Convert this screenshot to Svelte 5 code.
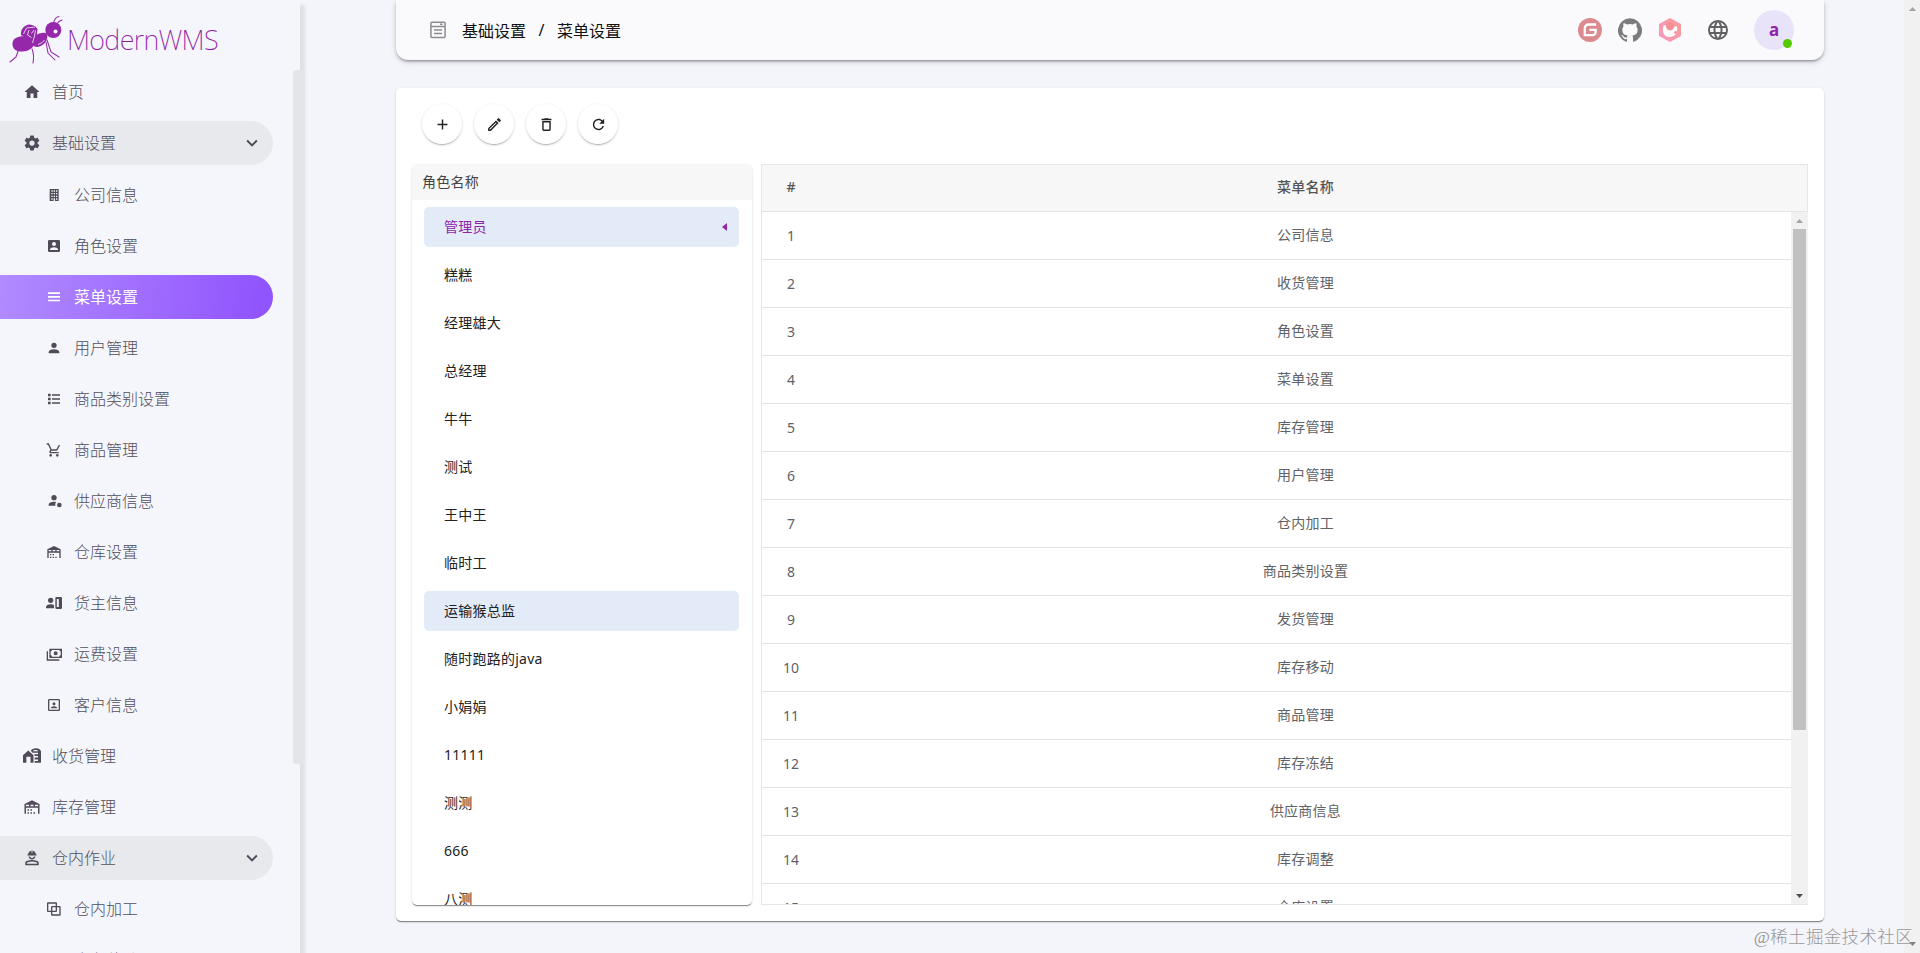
<script>
  const I = {
    home: 'M10,20V14H14V20H19V12H22L12,3L2,12H5V20H10Z',
    cog: 'M12,15.5A3.5,3.5 0 0,1 8.5,12A3.5,3.5 0 0,1 12,8.5A3.5,3.5 0 0,1 15.5,12A3.5,3.5 0 0,1 12,15.5M19.43,12.97C19.47,12.65 19.5,12.33 19.5,12C19.5,11.67 19.47,11.34 19.43,11L21.54,9.37C21.73,9.22 21.78,8.95 21.66,8.73L19.66,5.27C19.54,5.05 19.27,4.96 19.05,5.05L16.56,6.05C16.04,5.66 15.5,5.32 14.87,5.07L14.5,2.42C14.46,2.18 14.25,2 14,2H10C9.75,2 9.54,2.18 9.5,2.42L9.13,5.07C8.5,5.32 7.96,5.66 7.44,6.05L4.95,5.05C4.73,4.96 4.46,5.05 4.34,5.27L2.34,8.73C2.21,8.95 2.27,9.22 2.46,9.37L4.57,11C4.53,11.34 4.5,11.67 4.5,12C4.5,12.33 4.53,12.65 4.57,12.97L2.46,14.63C2.27,14.78 2.21,15.05 2.34,15.27L4.34,18.73C4.46,18.95 4.73,19.03 4.95,18.95L7.44,17.94C7.96,18.34 8.5,18.68 9.13,18.93L9.5,21.58C9.54,21.82 9.75,22 10,22H14C14.25,22 14.46,21.82 14.5,21.58L14.87,18.93C15.5,18.67 16.04,18.34 16.56,17.94L19.05,18.95C19.27,19.03 19.54,18.95 19.66,18.73L21.66,15.27C21.78,15.05 21.73,14.78 21.54,14.63L19.43,12.97Z',
    office: 'M5.500,3V21H19V3H5.500M8,5H10V7H8V5M11.500,5H13.500V7H11.500V5M15,5H17V7H15V5M8,9H10V11H8V9M11.500,9H13.500V11H11.500V9M15,9H17V11H15V9M8,13H10V15H8V13M11.500,13H13.500V15H11.500V13M15,13H17V15H15V13M8,17H10V19H8V17M11.500,17H13.500V21H11.500V17M15,17H17V19H15V17Z',
    accountBox: 'M6,17C6,15 10,13.9 12,13.9C14,13.9 18,15 18,17V18H6M15,9A3,3 0 0,1 12,12A3,3 0 0,1 9,9A3,3 0 0,1 12,6A3,3 0 0,1 15,9M3,5V19A2,2 0 0,0 5,21H19A2,2 0 0,0 21,19V5A2,2 0 0,0 19,3H5C3.89,3 3,3.9 3,5Z',
    menu: 'M3,5H21V7.5H3V5M3,10.500H21V13H3V10.500M3,16H21V18.500H3V16Z',
    account: 'M12,4A4,4 0 0,1 16,8A4,4 0 0,1 12,12A4,4 0 0,1 8,8A4,4 0 0,1 12,4M12,14C16.42,14 20,15.79 20,18V20H4V18C4,15.79 7.58,14 12,14Z',
    list: 'M3,4H7V8H3V4M9,5V7H21V5H9M3,10H7V14H3V10M9,11V13H21V11H9M3,16H7V20H3V16M9,17V19H21V17H9Z',
    cart: 'M17,18A2,2 0 0,1 19,20A2,2 0 0,1 17,22C15.89,22 15,21.1 15,20C15,18.89 15.89,18 17,18M1,2H4.27L8.5,11H15.5L19.4,4L21.1,5L17.3,11.97C16.96,12.58 16.3,13 15.55,13H8.1L7.2,14.63L7.17,14.75A0.25,0.25 0 0,0 7.42,15H19V17H7C5.89,17 5,16.1 5,15C5,14.65 5.09,14.32 5.24,14.04L6.6,11.59L3,4H1V2M7,18A2,2 0 0,1 9,20A2,2 0 0,1 7,22C5.89,22 5,21.1 5,20C5,18.89 5.89,18 7,18Z',
    supplier: 'M12,3A4,4 0 0,1 16,7A4,4 0 0,1 12,11A4,4 0 0,1 8,7A4,4 0 0,1 12,3M4,19V17C4,14.8 7.6,13 12,13C13.2,13 14.4,13.1 15.4,13.4C14,14.8 13.5,17 14.2,19H4M20,14.5A3.5,3.5 0 1,1 20,21.5A3.5,3.5 0 1,1 20,14.5Z',
    warehouse: 'M6 19H8V21H6V19M12 3L2 8V21H4V13H20V21H22V8L12 3M8 11H4V9H8V11M14 11H10V9H14V11M20 11H16V9H20V11M6 15H8V17H6V15M10 15H12V17H10V15M10 19H12V21H10V19M14 19H16V21H14V19Z',
    owner: 'M7,4A4,4 0 1,1 7,12A4,4 0 1,1 7,4M0,20V18C0,15.8 3,14 7,14C9,14 11,14.4 12,15.2V20H0M16,3H22A2,2 0 0,1 24,5V19A2,2 0 0,1 22,21H16A2,2 0 0,1 14,19V5A2,2 0 0,1 16,3M16.2,6V18H19.2V6H16.2Z',
    cash: 'M5,4H24V18H5V4M14.5,8A3,3 0 0,1 17.5,11A3,3 0 0,1 14.5,14A3,3 0 0,1 11.5,11A3,3 0 0,1 14.5,8M9,6A2,2 0 0,1 7,8V14A2,2 0 0,1 9,16H20A2,2 0 0,1 22,14V8A2,2 0 0,1 20,6H9M1,8H3V20H20V22H1V8Z',
    accountBoxO: 'M19,19H5V5H19M19,3H5A2,2 0 0,0 3,5V19A2,2 0 0,0 5,21H19A2,2 0 0,0 21,19V5A2,2 0 0,0 19,3M16.5,16.25C16.5,14.75 13.5,14 12,14C10.5,14 7.5,14.75 7.5,16.25V17H16.5M12,12.25A2.25,2.25 0 0,0 14.25,10A2.25,2.25 0 0,0 12,7.75A2.25,2.25 0 0,0 9.75,10A2.25,2.25 0 0,0 12,12.25Z',
    silo: 'M0,21V11L7,4.5L14,11V21H10V13H4.5V21H0M10.5,5C11,3 14,1.5 17.5,1.5C21,1.5 24,3.5 24,6V21H15.5V18.5H20V16.5H15.5V14H20V12H15.5V10.5L14.5,9.5H20V7.5H12.5L10.5,5M13,5.5H20.5C19,3.5 15,3.2 13,5.5Z',
    worker: 'M7,7C7,4.5 8.5,3 10.5,2.3V5H11.3V2H12.7V5H13.5V2.3C15.5,3 17,4.5 17,7H18V8.5H6V7H7M7.5,10H9.5C9.8,11.3 10.8,12 12,12C13.2,12 14.2,11.3 14.5,10H16.5C16.2,12.5 14.3,14 12,14C9.7,14 7.8,12.5 7.5,10M3,21.5V18.5C3,16 8,14.8 12,14.8C16,14.8 21,16 21,18.5V21.5H3M5,19.5H19V18.7C18.5,17.7 15,16.7 12,16.7C9,16.7 5.5,17.7 5,18.7V19.5Z',
    copy: 'M3,2H15A1.5,1.5 0 0,1 16.5,3.5V7.5H20.5A1.5,1.5 0 0,1 22,9V20.5A1.5,1.5 0 0,1 20.5,22H9A1.5,1.5 0 0,1 7.5,20.5V16.5H3A1.5,1.5 0 0,1 1.5,15V3.5A1.5,1.5 0 0,1 3,2M3.5,4V14.5H7.5V9A1.5,1.5 0 0,1 9,7.5H14.5V4H3.5M9.5,9.5V14.5H14.5V9.5H9.5M16.5,9.5V15A1.5,1.5 0 0,1 15,16.5H9.5V20H20V9.5H16.5Z',
    chevron: 'M7.41,8.58L12,13.17L16.59,8.58L18,10L12,16L6,10L7.41,8.58Z',
    plus: 'M19,13H13V19H11V13H5V11H11V5H13V11H19V13Z',
    pencil: 'M14.06,9L15,9.94L5.92,19H5V18.08L14.06,9M17.66,3C17.41,3 17.15,3.1 16.96,3.29L15.13,5.12L18.88,8.87L20.71,7.04C21.1,6.65 21.1,6 20.71,5.63L18.37,3.29C18.17,3.09 17.92,3 17.66,3M14.06,6.19L3,17.25V21H6.75L17.81,9.94L14.06,6.19Z',
    trash: 'M6,19A2,2 0 0,0 8,21H16A2,2 0 0,0 18,19V7H6V19M8,9H16V19H8V9M15.5,4L14.5,3H9.5L8.5,4H5V6H19V4H15.5Z',
    refresh: 'M17.65,6.35C16.2,4.9 14.21,4 12,4A8,8 0 0,0 4,12A8,8 0 0,0 12,20C15.73,20 18.84,17.45 19.73,14H17.65C16.83,16.33 14.61,18 12,18A6,6 0 0,1 6,12A6,6 0 0,1 12,6C13.66,6 15.14,6.69 16.22,7.78L13,11H20V4L17.65,6.35Z',
    web: 'M16.36,14C16.44,13.34 16.5,12.68 16.5,12C16.5,11.32 16.44,10.66 16.36,10H19.74C19.9,10.64 20,11.31 20,12C20,12.69 19.9,13.36 19.74,14M14.59,19.56C15.19,18.45 15.65,17.25 15.97,16H18.92C17.96,17.65 16.43,18.93 14.59,19.56M14.34,14H9.66C9.56,13.34 9.5,12.68 9.5,12C9.5,11.32 9.56,10.65 9.66,10H14.34C14.43,10.65 14.5,11.32 14.5,12C14.5,12.68 14.43,13.34 14.34,14M12,19.96C11.17,18.76 10.5,17.43 10.09,16H13.91C13.5,17.43 12.83,18.76 12,19.96M8,8H5.08C6.03,6.34 7.57,5.06 9.4,4.44C8.8,5.55 8.35,6.75 8,8M5.08,16H8C8.35,17.25 8.8,18.45 9.4,19.56C7.57,18.93 6.03,17.65 5.08,16M4.26,14C4.1,13.36 4,12.69 4,12C4,11.31 4.1,10.64 4.26,10H7.64C7.56,10.66 7.5,11.32 7.5,12C7.5,12.68 7.56,13.34 7.64,14M12,4.03C12.83,5.23 13.5,6.57 13.91,8H10.09C10.5,6.57 11.17,5.23 12,4.03M18.92,8H15.97C15.65,6.75 15.19,5.55 14.59,4.44C16.43,5.07 17.96,6.34 18.92,8M12,2A10,10 0 0,0 2,12A10,10 0 0,0 12,22A10,10 0 0,0 22,12A10,10 0 0,0 12,2Z',
    github: 'M12 0.3a12 12 0 0 0-3.8 23.4c.6.1.8-.3.8-.6v-2c-3.3.7-4-1.6-4-1.6-.6-1.4-1.4-1.8-1.4-1.8-1-.7.1-.7.1-.7 1.2 0 1.9 1.2 1.9 1.2 1 1.8 2.8 1.3 3.5 1 0-.8.4-1.3.7-1.6-2.7-.3-5.5-1.3-5.5-6 0-1.2.5-2.3 1.3-3.1-.2-.4-.6-1.6 0-3.2 0 0 1-.3 3.4 1.2a11.5 11.5 0 0 1 6 0c2.3-1.5 3.3-1.2 3.3-1.2.6 1.6.2 2.8 0 3.2.9.8 1.3 1.9 1.3 3.2 0 4.6-2.8 5.6-5.5 5.9.5.4.9 1 .9 2.2v3.3c0 .3.1.7.8.6A12 12 0 0 0 12 .3'
  };

  const nav = [
    { t: '首页', i: 'home' },
    { t: '基础设置', i: 'cog', group: true },
    { t: '公司信息', i: 'office', sub: true },
    { t: '角色设置', i: 'accountBox', sub: true },
    { t: '菜单设置', i: 'menu', sub: true, active: true },
    { t: '用户管理', i: 'account', sub: true },
    { t: '商品类别设置', i: 'list', sub: true },
    { t: '商品管理', i: 'cart', sub: true },
    { t: '供应商信息', i: 'supplier', sub: true },
    { t: '仓库设置', i: 'warehouse', sub: true },
    { t: '货主信息', i: 'owner', sub: true },
    { t: '运费设置', i: 'cash', sub: true },
    { t: '客户信息', i: 'accountBoxO', sub: true },
    { t: '收货管理', i: 'silo' },
    { t: '库存管理', i: 'warehouse' },
    { t: '仓内作业', i: 'worker', group: true },
    { t: '仓内加工', i: 'copy', sub: true },
    { t: '库存移动', i: 'copy', sub: true }
  ];
  const roles = ['管理员', '糕糕', '经理雄大', '总经理', '牛牛', '测试', '王中王', '临时工', '运输猴总监', '随时跑路的java', '小娟娟', '11111', '测测', '666', '八测'];
  const menus = ['公司信息', '收货管理', '角色设置', '菜单设置', '库存管理', '用户管理', '仓内加工', '商品类别设置', '发货管理', '库存移动', '商品管理', '库存冻结', '供应商信息', '库存调整', '仓库设置'];
  const tools = ['plus', 'pencil', 'trash', 'refresh'];
</script>

{#snippet icon(name, size)}
  <svg class="ic" width={size} height={size} viewBox="0 0 24 24"><path fill-rule="evenodd" d={I[name]} /></svg>
{/snippet}

<div class="page">
  <aside class="side">
    <div class="brand">
      <svg class="ant" width="56" height="52" viewBox="0 0 56 52">
        <g fill="#9527ab">
          <path d="M3.500 28C4 22.500 11 20.500 17 21.500C22 22 25.500 24 25.500 28C24.500 33.500 19 36.500 13 36.500C7 36.500 3 34 3.500 28Z" />
          <path d="M24 25C25 19 35 16 38 19C39.500 25 35 31.500 28 32C24 32 22 29 24 25Z" />
          <ellipse cx="44.300" cy="15" rx="8" ry="8" />
          <path d="M12 20C11.500 14 15 10 21 9.500L26 11L28.500 14L28 20L24 25L17 23Z" />
        </g>
        <circle cx="46.500" cy="16.500" r="2" fill="#f5f6fb" />
        <g fill="none" stroke="#f5f6fb" stroke-width=".8">
          <path d="M14.500 19L17.500 13L26 12" /><path d="M20 15L18.500 20L22.500 22.500" /><path d="M25 15L22.500 18.500" /><path d="M26.500 15.500L25.500 21L23.500 28" /><path d="M29 29.500Q34 28 35.500 25" />
        </g>
        <g fill="none" stroke="#9527ab" stroke-width="1.050" stroke-linecap="round">
          <path d="M9.500 35L7 42L1 47" /><path d="M23 34Q25.500 40 24 48" /><path d="M37 27L39 38L46 45" /><path d="M38 25L42 37L50 42" />
          <path d="M44.500 8Q46 2 50 1.500" /><path d="M48 9Q49.500 6 53 5" />
        </g>
      </svg>
      <span class="word">ModernWMS</span>
    </div>
    <nav>
      {#each nav as n}
        <div class="nav-item" class:sub={n.sub} class:group={n.group} class:active={n.active}>
          <span class="slot">{@render icon(n.i, n.sub ? 16 : 18)}</span>
          <span class="label">{n.t}</span>
          {#if n.group}<span class="chev">{@render icon('chevron', 22)}</span>{/if}
        </div>
      {/each}
    </nav>
    <i class="side-thumb"></i>
  </aside>

  <main>
    <header>
      <svg class="crumb-icon" width="16" height="18" viewBox="0 0 16 18" fill="none" stroke="#8c8c8c" stroke-width="1.500"><rect x=".9" y="1.200" width="14.200" height="15.400" rx="1" /><path d="M1 5.500H15M4 8.900H12M4 12.600H12M10 3.300H12.500" /></svg>
      <span class="crumb">基础设置</span><span class="slash">/</span><span class="crumb">菜单设置</span>
      <div class="links">
        <svg width="24" height="24" viewBox="0 0 24 24"><circle cx="12" cy="12" r="12" fill="#dc8a90" /><path d="M18.200 6.500H10.500A3.700 3.700 0 0 0 6.800 10.200V17.200H14.500A3.200 3.200 0 0 0 17.700 14V11.800H11.500" fill="none" stroke="#fff" stroke-width="2.300" /></svg>
        <svg width="24" height="24" viewBox="0 0 24 24" fill="#7b7b7f"><path d={I.github} /></svg>
        <svg width="24" height="24" viewBox="0 0 24 24"><defs><linearGradient id="hex" x1="0" y1="1" x2="1" y2="0"><stop offset="0" stop-color="#f59abf" /><stop offset="1" stop-color="#fb9a97" /></linearGradient></defs><path d="M12 0L23 6V18L12 24L1 18V6Z" fill="url(#hex)" /><path d="M5.500 7.500L9 7Q8.500 13 13 12.500Q15 12 16 9L18.500 8Q20 10 19 12.500A7.200 7.200 0 0 1 5 14Q4.500 11 5.500 7.500Z" fill="#fff" /><circle cx="17.500" cy="14.500" r="1.400" fill="#f98f96" /><circle cx="12" cy="8" r="4" fill="#f98f96" /></svg>
        <span class="globe">{@render icon('web', 24)}</span>
        <div class="avatar">a<i></i></div>
      </div>
    </header>

    <section class="card">
      <div class="tools">
        {#each tools as t}<button>{@render icon(t, 17)}</button>{/each}
      </div>
      <div class="cols">
        <div class="roles">
          <div class="roles-head">角色名称</div>
          <ul>
            {#each roles as r, k}
              <li class:hl={k === 0 || k === 8} class:sel={k === 0}>
                <span>{r}</span>
                {#if k === 0}<svg width="5" height="8" viewBox="0 0 5 8"><path d="M5 0V8L0 4Z" fill="#9527ab" /></svg>{/if}
              </li>
            {/each}
          </ul>
        </div>
        <div class="table">
          <div class="tr th"><span class="num">#</span><span class="name">菜单名称</span><span class="gut"></span></div>
          <div class="tbody">
            <div class="rows">
              {#each menus as m, k}
                <div class="tr"><span class="num">{k + 1}</span><span class="name">{m}</span></div>
              {/each}
            </div>
            <div class="bar">
              <svg width="7" height="4" viewBox="0 0 7 4"><path d="M0 4L3.500 0L7 4Z" fill="#a3a3a3" /></svg>
              <i></i>
              <svg class="down" width="7" height="4" viewBox="0 0 7 4"><path d="M0 0L3.500 4L7 0Z" fill="#505050" /></svg>
            </div>
          </div>
        </div>
      </div>
    </section>
  </main>

  <div class="page-bar">
    <svg width="7" height="4" viewBox="0 0 7 4"><path d="M0 4L3.500 0L7 4Z" fill="#a3a3a3" /></svg>
    <svg width="7" height="4" viewBox="0 0 7 4"><path d="M0 0L3.500 4L7 0Z" fill="#808080" /></svg>
  </div>
  <div class="mark">@稀土掘金技术社区</div>
</div>

<style>
  :global(body) { margin: 0; overflow: hidden; }
  .page {
    position: relative; display: flex; width: 1920px; height: 953px; overflow: hidden; background: #f4f5fa;
    font-family: "Noto Sans", "Noto Sans CJK SC", sans-serif; font-size: 14px; color: #222;
  }
  .page * { box-sizing: border-box; }
  .ic { display: block; fill: currentColor; }
  .side { position: relative; width: 300px; flex: none; height: 953px; background: #f5f6fb; box-shadow: 3px 7px 3px 2px #dfe0e4; overflow: visible; }
  .brand { display: flex; align-items: flex-start; height: 66px; padding: 15px 0 0 9px; }
  .ant { flex: none; }
  .word { margin: 7px 0 0 2px; font: 200 27px/36px "Noto Sans", "Open Sans", sans-serif; letter-spacing: -.65px; color: #8e1fa5; white-space: nowrap; }
  nav { height: 887px; overflow: hidden; padding-top: 4px; }
  .nav-item { display: flex; align-items: center; width: 273px; height: 44px; margin-bottom: 7px; border-radius: 0 22px 22px 0; padding-left: 20px; color: #514e5b; font-size: 16px; font-weight: 300; }
  .nav-item:nth-child(2) { margin-bottom: 8px; }
  .nav-item.sub { padding-left: 42px; }
  .slot { width: 24px; display: flex; justify-content: center; color: #4f4b59; }
  .label { margin-left: 8px; line-height: 24px; white-space: nowrap; }
  .nav-item.group { background: #e8e9ec; }
  .chev { margin-left: auto; margin-right: 10px; color: #4f4b59; }
  .nav-item.active { background: linear-gradient(98deg, #b18bff, #9155fd 94%); color: #fff; font-weight: 400; }
  .active .slot { color: #fff; }
  .side-thumb { position: absolute; left: 293px; top: 70px; width: 12px; height: 694px; border-radius: 3px; background: #e4e5e8; }
  main { width: 1428px; margin-left: 96px; display: flex; flex-direction: column; }
  header { height: 60px; flex: none; display: flex; align-items: center; padding: 0 30px 0 34px; background: #fafafd; border-radius: 0 0 12px 12px; box-shadow: 0 2px 3px -1px rgba(0,0,0,.42), 0 2px 6px rgba(0,0,0,.14); font-size: 16px; color: #111; }
  .crumb-icon { margin-right: 16px; }
  .slash { width: 31px; text-align: center; }
  .links { margin-left: auto; display: flex; align-items: center; gap: 16px; }
  .globe { margin: 0 8px; color: #606064; }
  .avatar { position: relative; width: 40px; height: 40px; border-radius: 50%; background: #e9e3f9; color: #8e24aa; font: bold 17px/40px "Noto Sans", sans-serif; text-align: center; }
  .avatar i { position: absolute; right: 2px; bottom: 2px; width: 9px; height: 9px; border-radius: 50%; background: #56ca00; }
  .card { height: 833px; margin-top: 28px; padding: 16px; background: #fff; border-radius: 5px; box-shadow: 0 2px 1px -1px rgba(0,0,0,.3), 0 1px 1px rgba(0,0,0,.18), 0 1px 3px rgba(0,0,0,.12); }
  .tools { display: flex; gap: 12px; height: 60px; padding-left: 10px; }
  button { width: 40px; height: 40px; padding: 0; border: 0; border-radius: 50%; background: #fff; color: #222; display: flex; align-items: center; justify-content: center; box-shadow: 0 2px 1px -1px rgba(0,0,0,.22), 0 1px 3px rgba(0,0,0,.16); }
  .cols { display: flex; gap: 9px; height: 741px; }
  .roles { width: 340px; height: 741px; flex: none; border-radius: 5px; overflow: hidden; background: #fff; box-shadow: 0 2px 1px -1px rgba(0,0,0,.3), 0 1px 1px rgba(0,0,0,.18), 0 1px 3px rgba(0,0,0,.1); letter-spacing: .25px; }
  .roles-head { height: 36px; padding-left: 10px; line-height: 36px; background: #f7f7f7; color: #444; }
  ul { list-style: none; margin: 0; padding: 7px 13px 0 12px; }
  li { display: flex; align-items: center; justify-content: space-between; height: 40px; margin-bottom: 8px; padding: 0 12px 0 20px; border-radius: 5px; }
  li span { line-height: 20px; }
  li.hl { background: #e3ebf9; }
  li.sel { color: #8e24aa; }
  .table { width: 1047px; height: 741px; border: 1px solid #e6e6e8; border-right: 0; overflow: hidden; }
  .tr { display: flex; height: 48px; border-bottom: 1px solid #e4e4e6; align-items: center; color: #606266; line-height: 20px; }
  .th { height: 47px; background: #f7f7f7; font-weight: 500; color: #555; border-right: 1px solid #e6e6e8; }
  .num { width: 58px; flex: none; text-align: center; }
  .name { flex: 1; text-align: center; letter-spacing: .25px; padding-bottom: 2px; }
  .th .num { padding-bottom: 2px; }
  .gut { width: 16px; }
  .tbody { display: flex; height: 692px; }
  .rows { flex: 1; overflow: hidden; height: 692px; }
  .bar { width: 17px; background: #f1f1f1; display: flex; flex-direction: column; align-items: center; padding-top: 7px; }
  .bar i { width: 13px; height: 501px; margin-top: 6px; background: #c1c1c1; }
  .bar .down { margin-top: auto; margin-bottom: 6px; }
  .page-bar { margin-left: auto; width: 16px; height: 953px; background: #f1f1f2; display: flex; flex-direction: column; justify-content: space-between; align-items: center; padding: 7px 0; }
  .mark { position: absolute; right: 7px; top: 923px; font: 300 17.500px/28px "Liberation Serif", "Noto Sans CJK SC", serif; letter-spacing: .35px; color: #999; white-space: nowrap; }
</style>
